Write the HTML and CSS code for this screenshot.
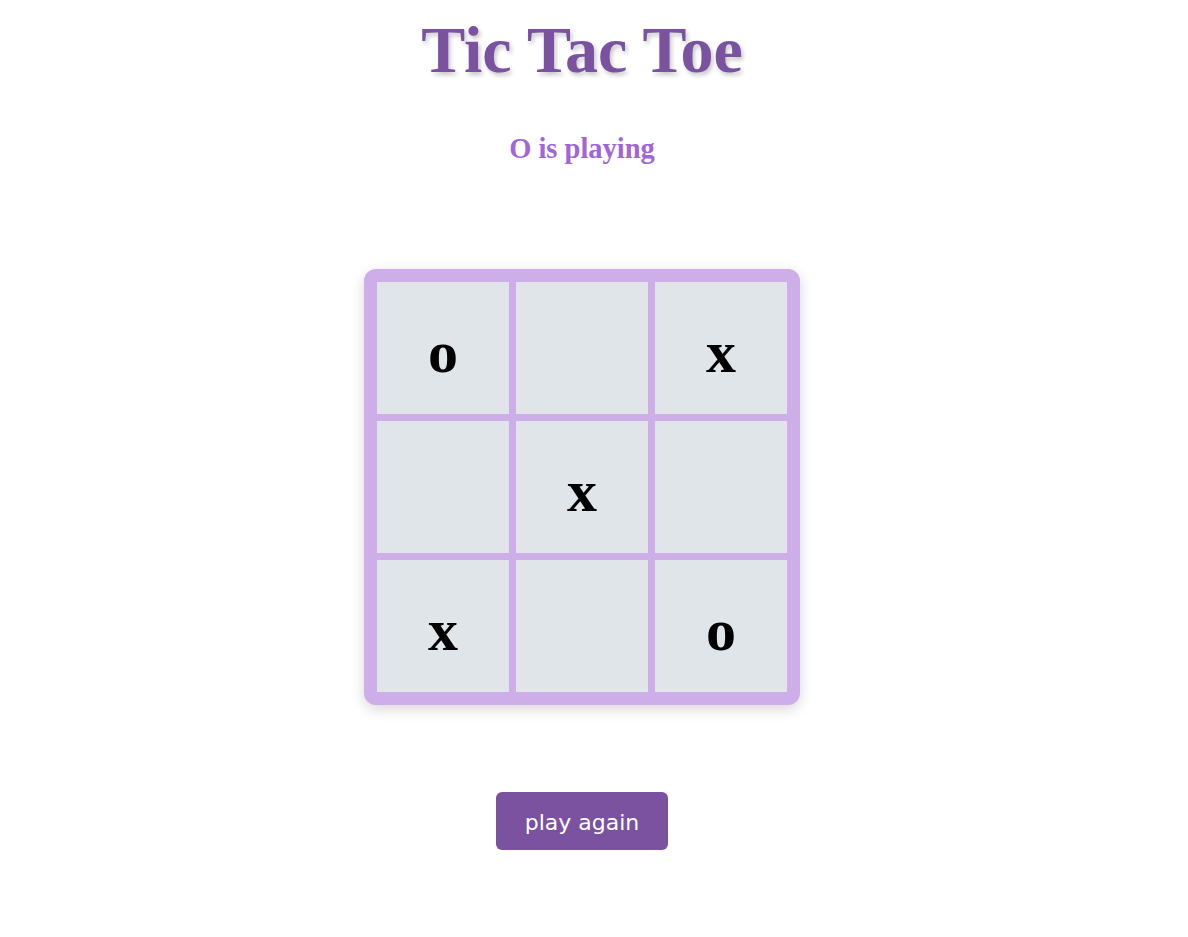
FILE: index.html
```html
<!DOCTYPE html>
<html lang="en">
<head>
<meta charset="utf-8">
<title>Tic Tac Toe</title>
<link rel="stylesheet" href="styles.css">
</head>
<body>
<main class="app">
  <h1 class="title">Tic Tac Toe</h1>
  <p class="status">O is playing</p>
  <div class="board">
    <div class="cell">o</div>
    <div class="cell"></div>
    <div class="cell">x</div>
    <div class="cell"></div>
    <div class="cell">x</div>
    <div class="cell"></div>
    <div class="cell">x</div>
    <div class="cell"></div>
    <div class="cell">o</div>
  </div>
  <button class="restart" type="button">play again</button>
</main>
</body>
</html>
```
FILE: styles.css
```css
html, body {
  margin: 0;
  padding: 0;
  background: #ffffff;
}

.app {
  width: 1164px;
  display: flex;
  flex-direction: column;
  align-items: center;
  font-family: "Liberation Serif", "Times New Roman", serif;
}

.title {
  margin: 13px 0 0;
  font-size: 66px;
  line-height: 74px;
  font-weight: bold;
  color: #7a52a0;
  text-shadow: 2px 3px 4px rgba(0, 0, 0, 0.22);
}

.status {
  margin: 46px 0 0;
  font-size: 28.5px;
  line-height: 32px;
  font-weight: bold;
  color: #a066d8;
}

.board {
  margin-top: 104px;
  display: grid;
  grid-template-columns: repeat(3, 132px);
  grid-template-rows: repeat(3, 132px);
  gap: 7px;
  padding: 13px;
  background: #cdaee9;
  border-radius: 12px;
  box-shadow: 0 4px 14px rgba(0, 0, 0, 0.16);
}

.cell {
  background: #dfe5e9;
  display: flex;
  align-items: center;
  justify-content: center;
  font-family: "Liberation Serif", "Times New Roman", serif;
  font-weight: bold;
  font-size: 60px;
  line-height: 1;
  color: #000000;
  padding-top: 7px;
  box-sizing: border-box;
}

.restart {
  margin-top: 87px;
  width: 172px;
  height: 58px;
  border: none;
  border-radius: 6px;
  background: #7a52a0;
  color: #ffffff;
  font-family: "DejaVu Sans", Verdana, sans-serif;
  font-size: 22px;
  padding: 2px 0 0;
}
```
